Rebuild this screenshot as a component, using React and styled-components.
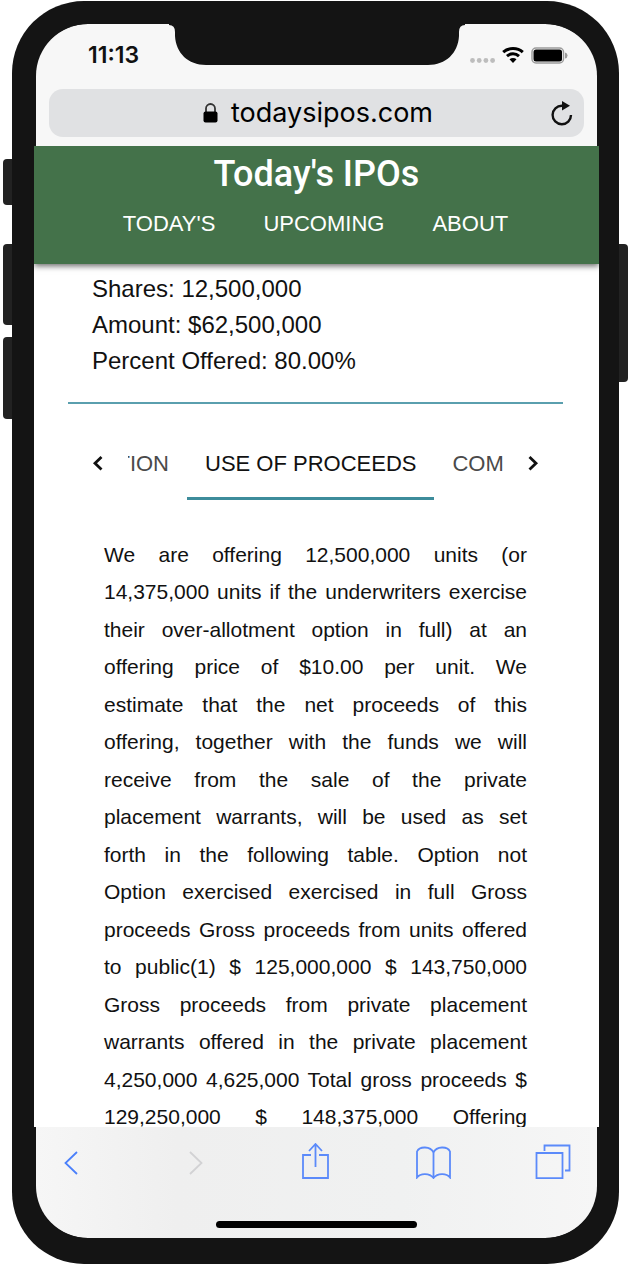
import React, { Fragment } from "react";
import styled, { createGlobalStyle } from "styled-components";

const GlobalStyle = createGlobalStyle`
  *, *::before, *::after { box-sizing: border-box; }
  body {
    margin: 0;
    background: #fff;
    color: #111;
    font-family: "Liberation Sans", Arial, sans-serif;
  }
  button { border: 0; padding: 0; background: none; color: inherit; font: inherit; cursor: pointer; }
  svg { display: block; }
`;

const Stage = styled.div`
  padding: 1px 12px;
`;

const Phone = styled.div`
  position: relative;
  padding: 23px 20px 26px 22px;
  border-radius: 72px;
  background: #141414;
`;

const SideButton = styled.span`
  position: absolute;
  top: ${(p) => p.$top}px;
  ${(p) => p.$side}: -9px;
  width: 9px;
  height: ${(p) => p.$height}px;
  background: #222;
  border-radius: ${(p) => (p.$side === "left" ? "4px 0 0 4px" : "0 4px 4px 0")};
`;

const Screen = styled.div`
  overflow: hidden;
  border-radius: 54px;
  background: #141414;
`;

const Notch = styled.svg`
  position: absolute;
  top: 22px;
  left: 50%;
  margin-left: -147px;
`;

const BrowserTop = styled.div`
  margin: 0 2px;
  padding: 0 13px 9px;
  border-radius: 52px 52px 0 0;
  background: #f7f7f7;
`;

const StatusBar = styled.div`
  display: flex;
  align-items: center;
  justify-content: space-between;
  height: 62px;
  margin-bottom: 3px;
  padding: 0 16px 0 39px;
`;

const Clock = styled.time`
  font: 600 23px/24px Inter, sans-serif;
`;

const StatusIcons = styled.div`
  display: flex;
  align-items: center;
  gap: 7px;
`;

const AddressBar = styled.div`
  display: grid;
  grid-template-columns: 1fr auto 1fr;
  align-items: center;
  height: 48px;
  padding: 0 10px 0 13px;
  border-radius: 14px;
  background: #e0e1e3;
`;

const Address = styled.button`
  grid-column: 2;
  display: flex;
  align-items: center;
  gap: 13px;
  color: #000;
  font: 400 27px/32px Inter, sans-serif;
`;

const Reload = styled.button`
  justify-self: end;
`;

const SiteHeader = styled.header`
  position: relative;
  height: 118px;
  padding-top: 8px;
  background: #44724a;
  color: #fff;
  text-align: center;
  box-shadow: 0 2px 6px rgba(0, 0, 0, 0.6);
  clip-path: inset(0 0 -12px);
`;

const SiteTitle = styled.h1`
  margin: 0;
  font: 500 36px/40px Roboto, sans-serif;
`;

const SiteNav = styled.nav`
  display: flex;
  justify-content: center;
  gap: 48px;
  padding: 14px 2px 0 0;
  font-size: 22px;
  line-height: 32px;
  a { color: inherit; text-decoration: none; }
`;

const Content = styled.main`
  padding: 7px 36px 0 34px;
  background: #fff;
`;

const Facts = styled.div`
  padding: 0 24px 23px;
  border-bottom: 2px solid #5a9fae;
  font-size: 24px;
  line-height: 36px;
  p { margin: 0; }
`;

const TabBar = styled.div`
  display: flex;
  height: 72px;
  margin-top: 24px;
`;

const ScrollButton = styled.button`
  display: grid;
  flex: 0 0 60px;
  place-items: center;
`;

const TabList = styled.div`
  display: flex;
  flex: 1;
  min-width: 0;
  overflow: hidden;
`;

const Tab = styled.button`
  display: flex;
  flex: ${(p) => p.$flex};
  justify-content: ${(p) => p.$align};
  align-items: center;
  min-width: 0;
  overflow: hidden;
  padding: ${(p) => p.$pad};
  border-bottom: 3px solid ${(p) => (p.$active ? "#3d8c9b" : "transparent")};
  color: ${(p) => (p.$active ? "#111" : "#4a4a4a")};
  font-size: 22px;
  line-height: 32px;
  white-space: nowrap;
`;

const Prospectus = styled.p`
  margin: 36px 0 0;
  padding: 0 36px;
  font-size: 21px;
  line-height: 1.785;
  text-align: justify;
  text-align-last: justify;
`;

const BrowserBottom = styled.div`
  position: relative;
  margin-top: -9px;
  padding: 0 2px;
  background: #141414;
`;

const BottomPanel = styled.div`
  padding: 16px 26px 10px 17px;
  border-radius: 0 0 52px 52px;
  background: linear-gradient(90deg, #f6f6f6, #efefef 25%, #f0f1f1 65%, #f6f6f6);
`;

const Toolbar = styled.div`
  display: flex;
  justify-content: space-between;
  margin-bottom: 42px;
`;

const HomeBar = styled.div`
  width: 201px;
  height: 7px;
  margin: 0 auto;
  border-radius: 4px;
  background: #000;
  position: relative;
  left: 4px;
`;

const proceeds = [
  "We are offering 12,500,000 units (or",
  "14,375,000 units if the underwriters exercise",
  "their over-allotment option in full) at an",
  "offering price of $10.00 per unit. We",
  "estimate that the net proceeds of this",
  "offering, together with the funds we will",
  "receive from the sale of the private",
  "placement warrants, will be used as set",
  "forth in the following table. Option not",
  "Option exercised exercised in full Gross",
  "proceeds Gross proceeds from units offered",
  "to public(1) $ 125,000,000 $ 143,750,000",
  "Gross proceeds from private placement",
  "warrants offered in the private placement",
  "4,250,000 4,625,000 Total gross proceeds $",
  "129,250,000 $ 148,375,000 Offering",
];

const toolPaths = [
  ["Back", "#4b80fb", "M24 9 12.500 20 24 31"],
  ["Forward", "#d2d2d4", "M16 9 27.500 20 16 31"],
  ["Share", "#5b8afa", "M17 12H9V35H34V12H25M21.500 24V1M15 8 21.500 1 28 8"],
  [
    "Bookmarks",
    "#5b8afa",
    "M18.500 9.500C15.500 3 4.500 3 2 8.500V34.500C5.500 30 14.500 30 18.500 35C22.500 30 31.500 30 35 34.500V8.500C32.500 3 21.500 3 18.500 9.500V35",
  ],
  ["Tabs", "#5b8afa", "M1.500 10H27.500V35.100H1.500ZM9.500 8V2.500H34.500V27.500H30"],
];

export default function App() {
  return (
    <>
      <GlobalStyle />
      <Stage>
        <Phone>
          <SideButton $side="left" $top={158} $height={46} />
          <SideButton $side="left" $top={243} $height={81} />
          <SideButton $side="left" $top={336} $height={82} />
          <SideButton $side="right" $top={243} $height={138} />
          <Screen>
            <BrowserTop>
              <StatusBar>
                <Clock>11:13</Clock>
                <StatusIcons>
                  <svg width="26" height="17" viewBox="0 0 26 17" fill="#bdbdbd">
                    <circle cx="3.500" cy="13.500" r="2.400" />
                    <circle cx="10.200" cy="13.500" r="2.400" />
                    <circle cx="16.900" cy="13.500" r="2.400" />
                    <circle cx="23.600" cy="13.500" r="2.400" />
                  </svg>
                  <svg width="22" height="17" viewBox="0 0 22 17" fill="none" stroke="#000" strokeWidth="3">
                    <path d="M1.200 5.200C6.500 .400 15.500 .400 20.800 5.200M5 9.200C8.500 6 13.500 6 17 9.200" />
                    <path d="M7.500 12.300C9.500 10.500 12.500 10.500 14.500 12.300L11 16Z" fill="#000" stroke="none" />
                  </svg>
                  <svg width="37" height="17" viewBox="0 0 37 17">
                    <rect x="1" y="1" width="31.500" height="15" rx="4" fill="none" stroke="#9c9c9c" strokeWidth="1.500" />
                    <rect x="2.500" y="2.500" width="28.500" height="12" rx="2.500" />
                    <path d="M34 5.500Q36.500 6 36.500 8.500T34 11.500Z" fill="#9c9c9c" />
                  </svg>
                </StatusIcons>
              </StatusBar>
              <AddressBar>
                <Address type="button">
                  <svg width="15" height="20" viewBox="0 0 15 20">
                    <path d="M3 9V5.500a4.500 4.500 0 0 1 9 0V9" fill="none" stroke="#333" strokeWidth="1.800" />
                    <rect x=".5" y="8.500" width="14" height="11" rx="2" />
                  </svg>
                  todaysipos.com
                </Address>
                <Reload type="button" aria-label="Reload">
                  <svg width="24" height="26" viewBox="0 0 24 26">
                    <path d="M21 15A9.200 9.200 0 1 1 12 5.800H14" fill="none" stroke="#111" strokeWidth="2.400" />
                    <path d="M12 1 20 5.800 12 10.500Z" fill="#111" />
                  </svg>
                </Reload>
              </AddressBar>
            </BrowserTop>
            <SiteHeader>
              <SiteTitle>Today's IPOs</SiteTitle>
              <SiteNav>
                <a href="#today">TODAY'S</a>
                <a href="#upcoming">UPCOMING</a>
                <a href="#about">ABOUT</a>
              </SiteNav>
            </SiteHeader>
            <Content>
              <Facts>
                <p>Shares: 12,500,000</p>
                <p>Amount: $62,500,000</p>
                <p>Percent Offered: 80.00%</p>
              </Facts>
              <TabBar>
                <ScrollButton type="button" aria-label="Previous tabs">
                  <svg width="12" height="18" viewBox="0 0 12 18" fill="none" stroke="#111" strokeWidth="2.800">
                    <path d="M9.500 2 3 8.200 9.500 14.500" />
                  </svg>
                </ScrollButton>
                <TabList role="tablist">
                  <Tab role="tab" $flex="0 0 59px" $align="flex-end" $pad="3px 18px 0 0">TION</Tab>
                  <Tab role="tab" aria-selected="true" $active $flex="none" $align="center" $pad="3px 18px 0">
                    USE OF PROCEEDS
                  </Tab>
                  <Tab role="tab" $flex="1" $align="flex-start" $pad="3px 0 0 18px">COM</Tab>
                </TabList>
                <ScrollButton type="button" aria-label="Next tabs">
                  <svg width="12" height="18" viewBox="0 0 12 18" fill="none" stroke="#111" strokeWidth="2.800">
                    <path d="M2.500 2 9 8.200 2.500 14.500" />
                  </svg>
                </ScrollButton>
              </TabBar>
              <Prospectus>
                {proceeds.map((line, i) => (
                  <Fragment key={line}>
                    {i > 0 && <br />}
                    {line}
                  </Fragment>
                ))}
              </Prospectus>
            </Content>
            <BrowserBottom>
              <BottomPanel>
                <Toolbar>
                  {toolPaths.map(([label, color, d]) => (
                    <button key={label} type="button" aria-label={label}>
                      <svg width="36" height="36" viewBox="0 0 36 36" fill="none" stroke={color} strokeWidth="1.800">
                        <path d={d} />
                      </svg>
                    </button>
                  ))}
                </Toolbar>
                <HomeBar />
              </BottomPanel>
            </BrowserBottom>
          </Screen>
          <Notch width="296" height="42" viewBox="0 0 296 42" fill="#141414" aria-hidden="true">
            <path d="M0 0H296V2Q290 2 290 9V13C289 30 277 42 259 42H37C19 42 7 30 6 13V9Q6 2 0 2Z" />
          </Notch>
        </Phone>
      </Stage>
    </>
  );
}
